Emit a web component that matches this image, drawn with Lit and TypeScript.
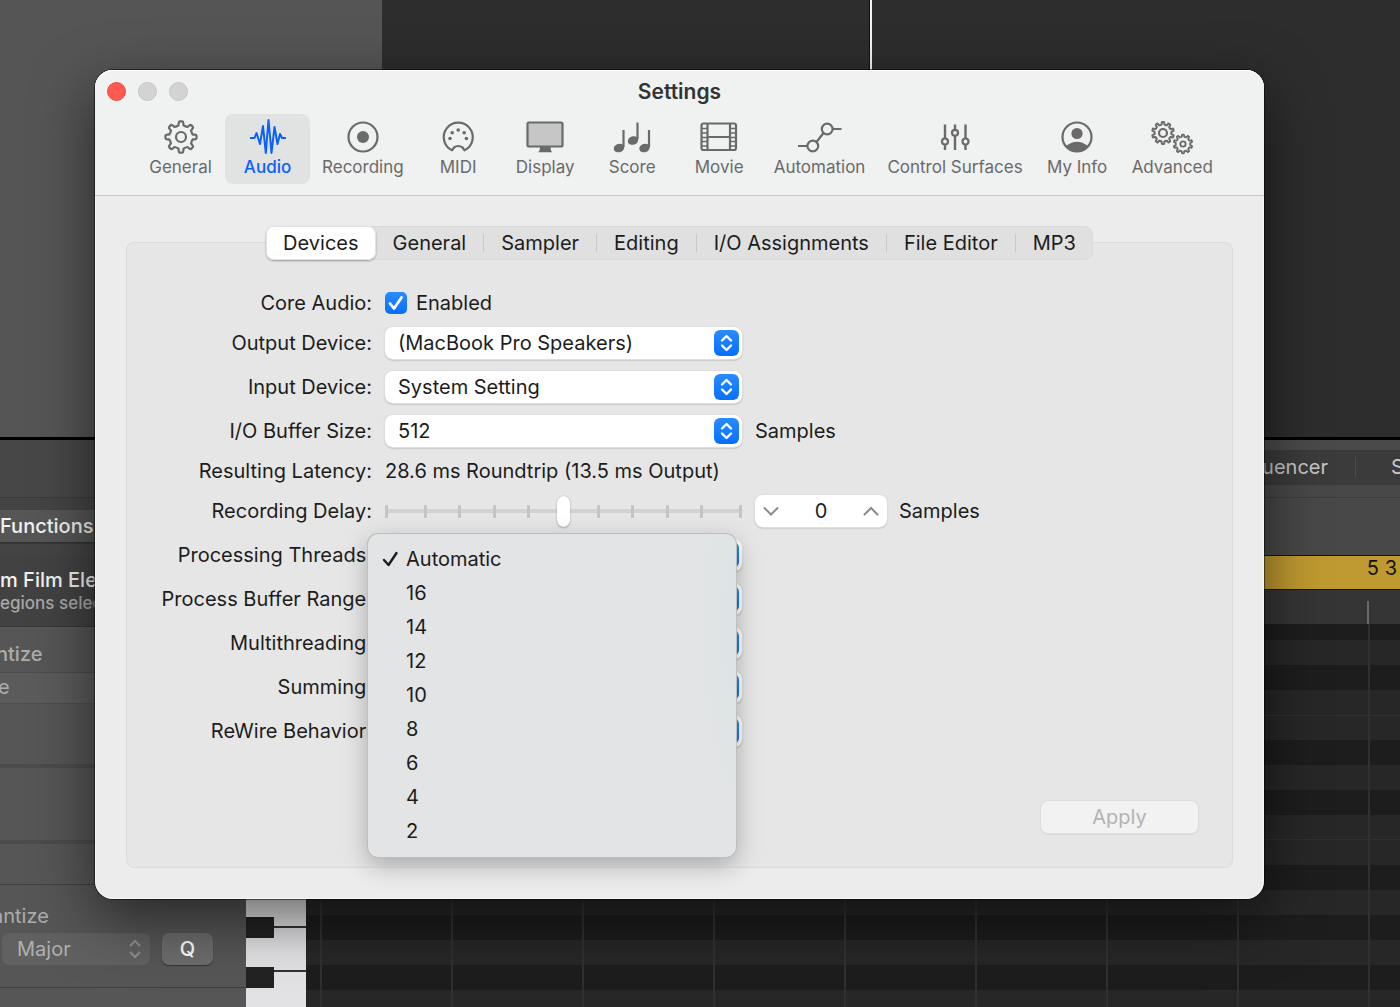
import { LitElement, html, svg, css } from "lit";
import { customElement, property, state } from "lit/decorators.js";
import { classMap } from "lit/directives/class-map.js";

/** Outline of a cog: flat teeth with soft shoulders around a centre point. */
function cog(cx: number, cy: number, outer: number, inner: number, teeth: number): string {
  const step = (Math.PI * 2) / teeth;
  const at = (r: number, a: number) =>
    `${(cx + r * Math.cos(a)).toFixed(2)} ${(cy + r * Math.sin(a)).toFixed(2)}`;
  const shoulder = inner + (outer - inner) * 0.6;
  let d = "";
  for (let i = 0; i < teeth; i++) {
    const a = i * step - Math.PI / 2;
    d += `${i ? "L" : "M"}${at(inner, a - step * 0.26)} `;
    d += `L${at(shoulder, a - step * 0.21)} `;
    d += `Q${at(outer, a - step * 0.19)} ${at(outer, a - step * 0.1)} `;
    d += `L${at(outer, a + step * 0.1)} `;
    d += `Q${at(outer, a + step * 0.19)} ${at(shoulder, a + step * 0.21)} `;
    d += `L${at(inner, a + step * 0.26)} `;
    d += `Q${at(inner - 0.6, a + step * 0.5)} ${at(inner, a + step * 0.74)} `;
  }
  return d + "Z";
}

const icons: Record<string, unknown> = {
  general: svg`<path d=${cog(22, 18, 15.6, 12, 8)}/><circle cx="22" cy="18" r="5"/>`,
  audio: svg`<path stroke-width="2" d="M4 19h4.500l2-5 3.500 11 3-18 2.800 27L22.500 1l3 33 3-26 3 17 2.500-10 2 4H40"/>`,
  recording: svg`<circle cx="22" cy="18" r="14.500"/><circle class="solid" cx="22" cy="18" r="6"/>`,
  midi: svg`<path d="M16 31.300A14.500 14.500 0 1 1 28.500 31.300L26.500 28.500Q22.250 25.500 18 28.500Z"/>
    <circle class="solid" cx="14" cy="19.500" r="1.800"/><circle class="solid" cx="16.200" cy="13.800" r="1.800"/>
    <circle class="solid" cx="22.200" cy="11" r="1.800"/><circle class="solid" cx="28.200" cy="13.800" r="1.800"/>
    <circle class="solid" cx="30.400" cy="19.500" r="1.800"/>`,
  display: svg`<rect x="4.500" y="3.500" width="35" height="24" rx="1.500" fill="#c6c6c6"/>
    <path class="solid" d="M17 28h10.500l.6 4 1.400 1.300H15l1.400-1.300z"/>`,
  score: svg`<path d="M13.500 28V11M27.500 20V3.500M39 28V11"/>
    <ellipse class="solid" cx="9" cy="29" rx="5.300" ry="4.200" transform="rotate(-18 9 29)"/>
    <ellipse class="solid" cx="23" cy="21.500" rx="5.300" ry="4.200" transform="rotate(-18 23 21.500)"/>
    <ellipse class="solid" cx="34.500" cy="29" rx="5.300" ry="4.200" transform="rotate(-18 34.500 29)"/>`,
  movie: svg`<rect x="4.500" y="4.500" width="34.500" height="26.500" rx="2"/>
    <path d="M10.500 4.500V31M33 4.500V31M10.500 18H33"/>
    <path stroke-width="1.500" d="M4.500 9.500h6M4.500 14h6M4.500 18.500h6M4.500 22.500h6M4.500 27h6M33 9.500h6M33 14h6M33 18.500h6M33 22.500h6M33 27h6"/>`,
  automation: svg`<path d="M0 27h9.500M34 10h9.500M18.500 23L25.500 14"/>
    <circle cx="14.800" cy="27" r="5.400"/><circle cx="29.200" cy="10" r="5.400"/>`,
  surfaces: svg`<path stroke-width="2.400" d="M12 5.500V19.500M12 25.500V31M22 5.500V10.500M22 17V31M32.500 5.500V19.500M32.500 25.500V31"/>
    <circle cx="12" cy="22.500" r="3"/><circle cx="22" cy="13.800" r="3"/><circle cx="32.500" cy="22.500" r="3"/>`,
  info: svg`<circle cx="22" cy="18" r="14.500"/><circle class="solid" cx="22" cy="14.500" r="5.600"/>
    <path class="solid" d="M11 27Q22 18.500 33 27Q29 32.500 22 32.500T11 27Z"/>`,
  advanced: svg`<path stroke-width="2" d=${cog(13, 14, 11, 8.600, 10)}/><circle cx="13" cy="14" r="4"/>
    <path stroke-width="1.800" d=${cog(33, 25, 9.400, 7.400, 10)}/><circle cx="33" cy="25" r="2.700" stroke-width="1.800"/>`,
};

@customElement("toolbar-item")
class ToolbarItem extends LitElement {
  static styles = css`
    :host { display: block; }
    .item {
      box-sizing: border-box;
      min-width: 85px;
      height: 70px;
      padding: 5px 10px 4px;
      border: 0;
      border-radius: 8px;
      background: transparent;
      color: #6a6a6a;
      font: 400 17px/24px Inter, "Liberation Sans", sans-serif;
      display: flex;
      flex-direction: column;
      align-items: center;
      gap: 0;
      white-space: nowrap;
    }
    .active { background: #e1e2e2; color: #0a60ff; }
    .active .label { font-weight: 500; }
    .icon {
      width: 44px;
      height: 36px;
      fill: none;
      stroke: currentColor;
      stroke-width: 2.2;
      stroke-linejoin: round;
      overflow: visible;
    }
    .icon .solid { fill: currentColor; stroke: none; }
  `;

  @property() icon = "";
  @property() label = "";
  @property({ type: Boolean }) active = false;

  render() {
    return html`<button
      class=${classMap({ item: true, active: this.active })}
      aria-pressed=${this.active ? "true" : "false"}
    >
      <svg class="icon" viewBox="0 0 44 36" aria-hidden="true">${icons[this.icon]}</svg>
      <span class="label">${this.label}</span>
    </button>`;
  }
}

@customElement("studio-backdrop")
class StudioBackdrop extends LitElement {
  static styles = css`
    :host {
      display: flex;
      flex-direction: column;
      min-height: 100vh;
      overflow: hidden;
      color: #b4b4b4;
      background: #2d2d2d;
      font: 400 20px/24px Inter, "Liberation Sans", sans-serif;
    }
    .arrange { display: flex; height: 437px; border-bottom: 3px solid #000; }
    .tracks { width: 382px; background: #555; }
    .timeline { width: 488px; border-right: 2px solid #f4f4f4; box-shadow: inset -1px 0 #111; }
    .editor { flex: 1; display: flex; }
    .inspector {
      box-sizing: border-box;
      width: 246px;
      background: #565656;
      display: flex;
      flex-direction: column;
      white-space: nowrap;
      overflow: hidden;
    }
    .blank { height: 57px; background: #474747; }
    .gap { height: 12px; background: #444; border-top: 1px solid #3b3b3b; }
    .functions {
      height: 32px;
      line-height: 32px;
      background: #565656;
      border-bottom: 1px solid #303030;
      color: #f2f2f2;
      font-weight: 500;
    }
    .region { height: 58px; padding: 12px 0 0; background: #424242; border-bottom: 1px solid #383838; }
    .name { color: #f2f2f2; font-weight: 500; }
    .count { font-size: 17px; line-height: 22px; font-weight: 500; color: #a8a8a8; }
    .heading { height: 45px; line-height: 54px; font-weight: 500; color: #adadad; text-indent: -4px; }
    .field { height: 30px; line-height: 28px; background: #5b5b5b; border-top: 1px solid #4c4c4c; color: #adadad; text-indent: -2px; }
    .slot { height: 60px; border-bottom: 4px solid #4c4c4c; border-top: 1px solid #4f4f4f; }
    .slot.tall { height: 72px; border-top: 0; }
    .slot.low { height: 40px; border-top: 0; border-bottom: 1px solid #404040; }
    .scale { padding: 19px 0 22px; border-bottom: 1px solid #3f3f3f; }
    .scale-title { display: block; color: #adadad; text-indent: -8px; }
    .scale-row { display: flex; gap: 12px; padding: 5px 0 0 2px; }
    .pick {
      display: flex;
      align-items: center;
      width: 148px;
      height: 32px;
      box-sizing: border-box;
      padding: 0 8px 0 0;
      border-radius: 7px;
      background: #616161;
    }
    .pick select {
      flex: 1;
      appearance: none;
      border: 0;
      margin: 0;
      padding: 0 0 0 15px;
      background: transparent;
      color: #b0b0b0;
      font: inherit;
      opacity: 1;
    }
    .arrows { width: 14px; height: 20px; fill: none; stroke: #909090; stroke-width: 2; }
    .quantize {
      width: 51px;
      height: 32px;
      border: 0;
      border-radius: 7px;
      padding: 0;
      background: #6c6c6c;
      box-shadow: 0 1px 1px #333;
      color: #fff;
      font: 500 20px/32px Inter, "Liberation Sans", sans-serif;
    }
    .roll { flex: 1; display: flex; flex-direction: column; min-width: 0; }
    .strip { height: 10px; background: #4a4a4a; }
    .tabs {
      display: flex;
      justify-content: flex-end;
      height: 35px;
      line-height: 34px;
      background: #3b3b3b;
      color: #c8c8c8;
    }
    .tab { padding-right: 27px; }
    .tab.cut { width: 9px; padding: 0 0 0 35px; margin: 0; }
    .divider { width: 1px; height: 20px; margin-top: 7px; background: #4c4c4c; }
    .tools { height: 70px; background: linear-gradient(#484848 12px, #3d3d3d 12px, #3d3d3d 13px, #484848 13px); }
    .cycle {
      height: 33px;
      line-height: 25px;
      border: solid #151515;
      border-width: 1px 0;
      background: #bf9a30;
      color: #141414;
      text-align: right;
      padding-right: 3px;
    }
    .ruler { height: 34px; background: linear-gradient(#6a6a6a, #6a6a6a) calc(100% - 31px) 100% / 2px 23px no-repeat #353535; }
    .notes { flex: 1; display: flex; }
    .keys {
      width: 60px;
      background:
        linear-gradient(
          transparent 52px, #222 52px, #222 73px, transparent 73px,
          transparent 102px, #222 102px, #222 123px, transparent 123px,
          transparent 177px, #222 177px, #222 198px, transparent 198px,
          transparent 227px, #222 227px, #222 248px, transparent 248px,
          transparent 277px, #222 277px, #222 298px, transparent 298px
        ) 0 66px / 28px 300px repeat-y,
        linear-gradient(
          transparent 25px, #333 25px, #333 27px, transparent 27px,
          transparent 66px, #333 66px, #333 68px, transparent 68px,
          transparent 108px, #333 108px, #333 110px, transparent 110px,
          transparent 149px, #333 149px, #333 151px, transparent 151px,
          transparent 193px, #333 193px, #333 195px, transparent 195px,
          transparent 236px, #333 236px, #333 238px, transparent 238px,
          transparent 280px, #333 280px, #333 282px, transparent 282px
        ) 0 66px / 100% 300px repeat-y,
        #e2e2e4;
    }
    .lanes {
      flex: 1;
      background:
        linear-gradient(90deg, #303030 2px, transparent 2px) 14px 0 / 131px 100% repeat-x,
        linear-gradient(
          #272727 25px, #303030 25px, #303030 26px, #272727 26px, #272727 50px,
          #1d1d1d 50px, #1d1d1d 75px, #272727 75px, #272727 100px,
          #1d1d1d 100px, #1d1d1d 125px, #272727 125px, #272727 149px,
          #303030 149px, #303030 150px, #272727 150px, #272727 175px,
          #1d1d1d 175px, #1d1d1d 200px, #272727 200px, #272727 225px,
          #1d1d1d 225px, #1d1d1d 250px, #272727 250px, #272727 275px,
          #1d1d1d 275px, #1d1d1d 300px
        ) 0 66px / 100% 300px repeat-y;
    }
  `;

  render() {
    return html`
      <div class="arrange"><div class="tracks"></div><div class="timeline"></div></div>
      <div class="editor">
        <div class="inspector">
          <div class="blank"></div>
          <div class="gap"></div>
          <div class="functions">Functions</div>
          <div class="gap"></div>
          <div class="region"><div class="name">m Film Ele</div><div class="count">egions selec</div></div>
          <div class="heading">ntize</div>
          <div class="field">e</div>
          <div class="slot"></div>
          <div class="slot tall"></div>
          <div class="slot low"></div>
          <div class="scale">
            <label class="scale-title" for="scale">antize</label>
            <div class="scale-row">
              <div class="pick">
                <select id="scale"><option>Major</option></select>
                <svg class="arrows" viewBox="0 0 14 20" aria-hidden="true"><path d="M2 7l5-5 5 5M2 13l5 5 5-5"/></svg>
              </div>
              <button class="quantize">Q</button>
            </div>
          </div>
        </div>
        <div class="roll">
          <div class="strip"></div>
          <div class="tabs">
            <span class="tab">uencer</span><span class="divider"></span><span class="tab cut">S</span>
          </div>
          <div class="tools"></div>
          <div class="cycle">5 3</div>
          <div class="ruler"></div>
          <div class="notes"><div class="keys"></div><div class="lanes"></div></div>
        </div>
      </div>
    `;
  }
}

@customElement("app-root")
class AppRoot extends LitElement {
  static styles = css`
    :host {
      display: block;
      position: relative;
      min-height: 100vh;
      overflow: hidden;
      color: #1c1c1c;
      font: 400 20px/24px Inter, "Liberation Sans", sans-serif;
    }
    button, input, select { font: inherit; color: inherit; margin: 0; }
    .window {
      position: absolute;
      top: 70px;
      left: 95px;
      right: 136px;
      border-radius: 18px;
      background: #ececec;
      box-shadow: 0 0 0 1px rgba(0, 0, 0, 0.5), 0 20px 60px rgba(0, 0, 0, 0.55), inset 0 0 0 1px rgba(255, 255, 255, 0.6);
    }
    .titlebar {
      border-bottom: 1px solid #c9c9c9;
      border-radius: 18px 18px 0 0;
      background: #f0f1f1;
      box-shadow: inset 0 1px #fff;
      padding-bottom: 11px;
    }
    .heading-row {
      display: grid;
      grid-template-columns: 1fr auto 1fr;
      align-items: center;
      height: 43px;
      padding: 0 12px 1px;
    }
    .lights { display: flex; gap: 12px; }
    .light {
      width: 19px;
      height: 19px;
      padding: 0;
      border: 1px solid #c6c6c6;
      border-radius: 50%;
      background: #d3d3d3;
    }
    .light.close { background: #ff5a52; border-color: #ea4b43; }
    .title { margin: 0; font-size: 21px; line-height: 24px; font-weight: 600; color: #333; }
    .toolbar { display: flex; justify-content: center; gap: 2px; padding-left: 2px; }
    .body { padding: 30px 31px 31px; }
    .segments {
      position: relative;
      display: flex;
      width: max-content;
      margin: 0 auto -18px;
      border-radius: 9px;
      background: #e0e0e0;
      box-shadow: inset 0 0 0 1px #dadada;
    }
    .segment {
      display: flex;
      align-items: center;
      height: 34px;
      padding: 0 17px;
      border: 0;
      border-radius: 8px;
      background: transparent;
      white-space: nowrap;
      line-height: 34px;
    }
    .segment.on { background: #fff; box-shadow: inset 0 0 0 1px #e3e3e3, 0 1px 2px rgba(0, 0, 0, 0.35); }
    .rule { width: 1px; height: 18px; margin-top: 8px; background: #c9c9c9; }
    .panel {
      border: 1px solid #dcdcdc;
      border-radius: 8px;
      background: #e6e6e6;
      padding: 48px 34px 34px 0;
    }
    .form { display: flex; flex-direction: column; gap: 12px; }
    .row {
      display: grid;
      grid-template-columns: 245px 357px auto;
      column-gap: 13px;
      justify-content: start;
      align-items: center;
      min-height: 24px;
      white-space: nowrap;
    }
    .caption { text-align: right; }
    .cell { position: relative; display: flex; align-items: center; gap: 9px; }
    .check { position: relative; width: 22px; height: 22px; }
    .check input {
      appearance: none;
      display: block;
      width: 22px;
      height: 22px;
      border-radius: 5px;
      background: linear-gradient(#2b8bff, #0670fb);
    }
    .tick { position: absolute; inset: 0; fill: none; stroke: #fff; stroke-width: 2.8; stroke-linecap: round; stroke-linejoin: round; pointer-events: none; }
    .popup { position: relative; flex: 1; }
    .popup select {
      appearance: none;
      display: block;
      width: 100%;
      height: 32px;
      padding: 0 40px 0 13px;
      border: 0;
      border-radius: 8px;
      background: #fff;
      box-shadow: 0 0 0 1px #dedede, 0 1px 2px rgba(0, 0, 0, 0.4);
      line-height: 30px;
    }
    .cap {
      position: absolute;
      top: 3px;
      right: 3px;
      width: 25px;
      height: 26px;
      border-radius: 6px;
      background: linear-gradient(#2a8bff, #0670fb);
      fill: none;
      stroke: #fff;
      stroke-width: 2.4;
      stroke-linecap: round;
      stroke-linejoin: round;
      pointer-events: none;
    }
    .slider { position: relative; flex: 1; height: 32px; }
    .ticks {
      position: absolute;
      inset: 0;
      display: flex;
      justify-content: space-between;
      align-items: center;
      background: linear-gradient(#d2d2d2, #d2d2d2) 0 50% / 100% 4px no-repeat;
    }
    .mark { width: 3px; height: 13px; border-radius: 1px; background: #c4c4c4; }
    .mark:first-child { margin-right: 4px; }
    .mark:last-child { margin-left: 4px; }
    .slider input {
      appearance: none;
      position: relative;
      display: block;
      width: 100%;
      height: 32px;
      background: transparent;
    }
    .slider input::-webkit-slider-thumb {
      appearance: none;
      width: 13px;
      height: 31px;
      border-radius: 7px;
      background: #fff;
      box-shadow: 0 0 1px rgba(0, 0, 0, 0.3), 0 1px 2px rgba(0, 0, 0, 0.25);
    }
    .extra { display: flex; align-items: center; gap: 12px; }
    .stepper {
      display: flex;
      align-items: center;
      width: 132px;
      height: 32px;
      border-radius: 8px;
      background: #fff;
      box-shadow: 0 0 0 1px #dedede, 0 1px 2px rgba(0, 0, 0, 0.3);
    }
    .step { width: 32px; height: 32px; padding: 0; border: 0; background: transparent; flex: none; }
    .chevron { display: block; width: 32px; height: 32px; fill: none; stroke: #8b8b8b; stroke-width: 2; stroke-linecap: round; }
    .stepper input { flex: 1; min-width: 0; width: 20px; padding: 0; border: 0; background: transparent; text-align: center; line-height: 30px; }
    .menu {
      position: absolute;
      z-index: 2;
      top: -5px;
      left: -17px;
      width: 368px;
      box-sizing: border-box;
      margin: 0;
      padding: 8px 0 9px;
      list-style: none;
      border-radius: 10px;
      background:
        radial-gradient(40px 200px at 100% 90px, #dce4e5, rgba(220, 228, 229, 0)),
        #e3e4e6;
      box-shadow: 0 0 0 1px #bdbebf, 0 8px 26px rgba(0, 0, 0, 0.28);
    }
    .choice {
      display: flex;
      align-items: center;
      width: 100%;
      height: 34px;
      padding: 0 14px;
      border: 0;
      background: transparent;
      text-align: left;
    }
    .choice-mark { width: 24px; height: 20px; flex: none; fill: none; stroke: #1c1c1c; stroke-width: 2.4; stroke-linecap: round; stroke-linejoin: round; }
    .actions { display: flex; justify-content: flex-end; margin-top: 54px; }
    .apply {
      width: 157px;
      height: 32px;
      padding: 0;
      border: 0;
      border-radius: 7px;
      background: #f2f2f2;
      color: #b3b3b3;
      line-height: 30px;
      box-shadow: 0 0 0 1px #dedede, 0 1px 2px rgba(0, 0, 0, 0.14);
    }
  `;

  @state() private threads = "Automatic";

  private tools = [
    ["general", "General"],
    ["audio", "Audio"],
    ["recording", "Recording"],
    ["midi", "MIDI"],
    ["display", "Display"],
    ["score", "Score"],
    ["movie", "Movie"],
    ["automation", "Automation"],
    ["surfaces", "Control Surfaces"],
    ["info", "My Info"],
    ["advanced", "Advanced"],
  ];

  private segments = ["Devices", "General", "Sampler", "Editing", "I/O Assignments", "File Editor", "MP3"];
  private threadChoices = ["Automatic", "16", "14", "12", "10", "8", "6", "4", "2"];

  private popup(id: string, label: string, value: string, suffix = "", menu: unknown = "") {
    return html`<div class="row">
      <label class="caption" for=${id}>${label}:</label>
      <div class="cell">
        <div class="popup">
          <select id=${id}><option>${value}</option></select>
          <svg class="cap" viewBox="0 0 25 26" aria-hidden="true"><path d="M8 10.500l4.500-4.500 4.500 4.500M8 15.500l4.500 4.500 4.500-4.500"/></svg>
        </div>
        ${menu}
      </div>
      ${suffix ? html`<span>${suffix}</span>` : ""}
    </div>`;
  }

  private menu() {
    return html`<ul class="menu" role="menu">
      ${this.threadChoices.map(
        (choice) => html`<li role="none">
          <button
            class="choice"
            role="menuitemradio"
            aria-checked=${choice === this.threads ? "true" : "false"}
            @click=${() => (this.threads = choice)}
          >
            <svg class="choice-mark" viewBox="0 0 24 20" aria-hidden="true">
              ${choice === this.threads ? svg`<path d="M2 11l4.500 5L14.500 4"/>` : ""}
            </svg>
            <span>${choice}</span>
          </button>
        </li>`
      )}
    </ul>`;
  }

  render() {
    return html`
      <studio-backdrop></studio-backdrop>
      <section class="window" role="dialog" aria-labelledby="title">
        <header class="titlebar">
          <div class="heading-row">
            <div class="lights">
              <button class="light close"></button><button class="light" disabled></button><button class="light" disabled></button>
            </div>
            <h1 class="title" id="title">Settings</h1>
          </div>
          <nav class="toolbar">
            ${this.tools.map(
              ([icon, label]) =>
                html`<toolbar-item icon=${icon} label=${label} ?active=${icon === "audio"}></toolbar-item>`
            )}
          </nav>
        </header>
        <div class="body">
          <div class="segments" role="tablist">
            ${this.segments.map(
              (name, i) => html`${i > 1 ? html`<span class="rule"></span>` : ""}
                <button class=${classMap({ segment: true, on: i === 0 })} role="tab" aria-selected=${i === 0 ? "true" : "false"}>${name}</button>`
            )}
          </div>
          <div class="panel">
            <div class="form">
              <div class="row">
                <span class="caption">Core Audio:</span>
                <div class="cell">
                  <div class="check">
                    <input id="core" type="checkbox" checked />
                    <svg class="tick" viewBox="0 0 22 22" aria-hidden="true"><path d="M5 11.500l4 5L16.500 5.500"/></svg>
                  </div>
                  <label for="core">Enabled</label>
                </div>
              </div>
              ${this.popup("output", "Output Device", "(MacBook Pro Speakers)")}
              ${this.popup("input", "Input Device", "System Setting")}
              ${this.popup("buffer", "I/O Buffer Size", "512", "Samples")}
              <div class="row">
                <span class="caption">Resulting Latency:</span>
                <span>28.6 ms Roundtrip (13.5 ms Output)</span>
              </div>
              <div class="row">
                <label class="caption" for="delay">Recording Delay:</label>
                <div class="cell">
                  <div class="slider">
                    <div class="ticks">${Array.from({ length: 11 }, () => html`<span class="mark"></span>`)}</div>
                    <input id="delay" type="range" min="-100" max="100" value="0" />
                  </div>
                </div>
                <div class="extra">
                  <div class="stepper">
                    <button class="step"><svg class="chevron" viewBox="0 0 32 32" aria-hidden="true"><path d="M9.500 13l6.500 6.500 6.500-6.500"/></svg></button>
                    <input id="samples" type="text" value="0" />
                    <button class="step"><svg class="chevron" viewBox="0 0 32 32" aria-hidden="true"><path d="M9.500 19.500l6.500-6.500 6.500 6.500"/></svg></button>
                  </div>
                  <label for="samples">Samples</label>
                </div>
              </div>
              ${this.popup("threads", "Processing Threads", this.threads, "", this.menu())}
              ${this.popup("range", "Process Buffer Range", "")}
              ${this.popup("multi", "Multithreading", "")}
              ${this.popup("summing", "Summing", "")}
              ${this.popup("rewire", "ReWire Behavior", "")}
            </div>
            <div class="actions"><button class="apply" disabled>Apply</button></div>
          </div>
        </div>
      </section>
    `;
  }
}
